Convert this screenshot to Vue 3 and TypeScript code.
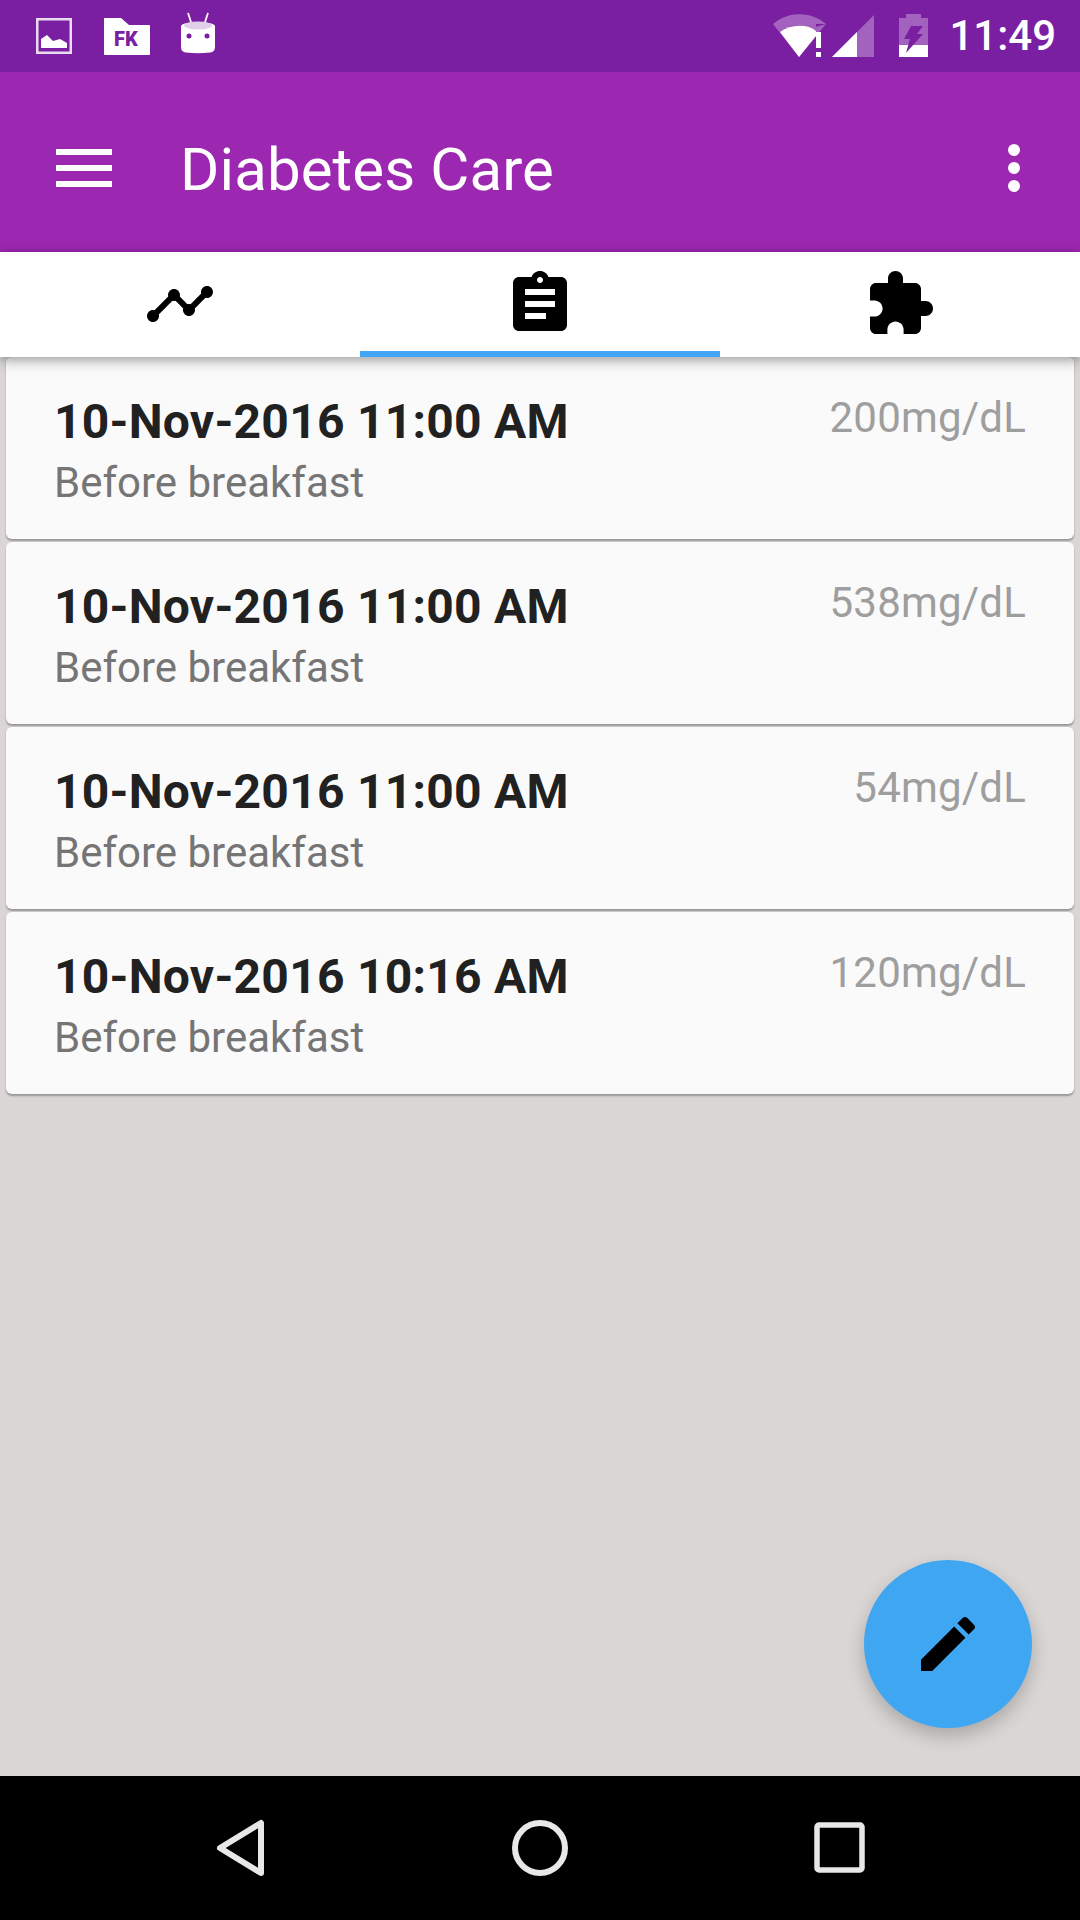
<script setup lang="ts">
interface Reading {
  time: string;
  meal: string;
  value: string;
}

const readings: Reading[] = [
  { time: "10-Nov-2016 11:00 AM", meal: "Before breakfast", value: "200mg/dL" },
  { time: "10-Nov-2016 11:00 AM", meal: "Before breakfast", value: "538mg/dL" },
  { time: "10-Nov-2016 11:00 AM", meal: "Before breakfast", value: "54mg/dL" },
  { time: "10-Nov-2016 10:16 AM", meal: "Before breakfast", value: "120mg/dL" },
];
</script>

<template>
  <div class="screen">
    <div class="status">
      <div class="status-left">
        <svg width="36" height="48" viewBox="0 0 36 48">
          <rect x="1.25" y="7.25" width="33.5" height="33.5" fill="none" stroke="#e9dcf0" stroke-width="2.5" />
          <polygon points="5,36 5,27 11,23 17,29 24,27 31,31 31,36" fill="#fff" />
        </svg>
        <svg width="47" height="48" viewBox="0 0 47 48">
          <path d="M1 6h17l8 7h20c.6 0 1 .4 1 1v28c0 .6-.4 1-1 1H2c-.6 0-1-.4-1-1z" fill="#fff" />
          <text x="11" y="34" class="fk">FK</text>
        </svg>
        <svg width="34" height="48" viewBox="0 0 34 48">
          <path d="M7 1l3 9M27 1l-3 9" stroke="#fff" stroke-width="1.8" fill="none" />
          <path d="M0 14c0-2 8-4 17-4s17 2 17 4v20c0 4-1 6-5 6.500-8 1-16 1-24 0-4-.5-5-2.500-5-6.500z" fill="#fff" />
          <ellipse cx="17" cy="13.500" rx="14" ry="4" fill="#e0d0ea" />
          <circle cx="8" cy="24" r="2.500" fill="#7b1fa2" />
          <circle cx="26" cy="24" r="2.500" fill="#7b1fa2" />
        </svg>
      </div>
      <div class="status-right">
        <svg class="wifi" width="53" height="48" viewBox="0 0 53 48">
          <path d="M0 12C15-1 38-1 53 12L26 45z" fill="#fff" fill-opacity=".3" />
          <path d="M7 20c11-8 28-8 36-1v5L26 45z" fill="#fff" />
          <path d="M43 12h10v33H43z" fill="#7b1fa2" />
          <path d="M53 12L43 24V14.800z" fill="#fff" fill-opacity=".3" />
          <rect x="43" y="20" width="5" height="16" fill="#fff" />
          <rect x="43" y="40" width="5" height="5" fill="#fff" />
        </svg>
        <svg class="signal" width="43" height="48" viewBox="0 0 43 48">
          <polygon points="1,45 43,3 43,45" fill="#fff" fill-opacity=".3" />
          <polygon points="1,45 26,20 26,45" fill="#fff" />
        </svg>
        <svg class="battery" width="29" height="48" viewBox="0 0 29 48">
          <path d="M7 2h15v4h7v27H0V6h7z" fill="#fff" fill-opacity=".3" />
          <rect y="33" width="29" height="12" fill="#fff" />
          <polygon points="12,14 24,14 18,22 24,22 7,41 11,27 5,27" fill="#7b1fa2" />
        </svg>
        <span class="clock">11:49</span>
      </div>
    </div>

    <header class="toolbar">
      <div class="menu">
        <span></span>
        <span></span>
        <span></span>
      </div>
      <h1 class="title">Diabetes Care</h1>
      <div class="more">
        <span></span>
        <span></span>
        <span></span>
      </div>
    </header>

    <nav class="tabs">
      <div class="tab">
        <svg width="72" height="72" viewBox="0 0 24 24">
          <path d="M23 8c0 1.100-.9 2-2 2-.18 0-.35-.02-.51-.07l-3.560 3.550c.05.16.07.34.07.52 0 1.100-.9 2-2 2s-2-.9-2-2c0-.18.02-.36.07-.52l-2.550-2.550c-.16.05-.34.07-.52.07s-.36-.02-.52-.07l-4.550 4.560c.05.16.07.33.07.51 0 1.100-.9 2-2 2s-2-.9-2-2 .9-2 2-2c.18 0 .35.02.51.07l4.560-4.550C8.020 9.360 8 9.180 8 9c0-1.100.9-2 2-2s2 .9 2 2c0 .18-.02.36-.07.52l2.550 2.550c.16-.05.34-.07.52-.07s.36.02.52.07l3.550-3.560C19.020 8.350 19 8.180 19 8c0-1.100.9-2 2-2s2 .9 2 2z" />
        </svg>
      </div>
      <div class="tab active">
        <svg width="72" height="72" viewBox="0 0 24 24">
          <path d="M19 3h-4.180C14.400 1.840 13.300 1 12 1c-1.300 0-2.400.84-2.820 2H5c-1.100 0-2 .9-2 2v14c0 1.100.9 2 2 2h14c1.100 0 2-.9 2-2V5c0-1.100-.9-2-2-2zm-7 0c.55 0 1 .45 1 1s-.45 1-1 1-1-.45-1-1 .45-1 1-1zm2 14H7v-2h7v2zm3-4H7v-2h10v2zm0-4H7V7h10v2z" />
        </svg>
      </div>
      <div class="tab">
        <svg width="72" height="72" viewBox="0 0 24 24">
          <path d="M20.500 11H19V7c0-1.100-.9-2-2-2h-4V3.500C13 2.120 11.880 1 10.500 1S8 2.120 8 3.500V5H4c-1.100 0-1.990.9-1.990 2v3.800H3.500c1.490 0 2.700 1.210 2.700 2.700s-1.210 2.700-2.700 2.700H2V20c0 1.100.9 2 2 2h3.800v-1.500c0-1.490 1.210-2.700 2.700-2.700 1.490 0 2.700 1.210 2.700 2.700V22H17c1.100 0 2-.9 2-2v-4h1.500c1.380 0 2.500-1.120 2.500-2.500S21.880 11 20.500 11z" />
        </svg>
      </div>
    </nav>

    <main class="content">
      <div v-for="(item, i) in readings" :key="i" class="card">
        <div class="card-main">
          <div class="card-time">{{ item.time }}</div>
          <div class="card-meal">{{ item.meal }}</div>
        </div>
        <div class="card-value">{{ item.value }}</div>
      </div>

      <button class="fab">
        <svg width="72" height="72" viewBox="0 0 24 24">
          <path d="M3 17.250V21h3.750L17.810 9.940l-3.750-3.750L3 17.250zM20.710 7.040c.39-.39.39-1.020 0-1.410l-2.340-2.340c-.39-.39-1.020-.39-1.410 0l-1.830 1.830 3.750 3.750 1.830-1.830z" />
        </svg>
      </button>
    </main>

    <footer class="navbar">
      <svg width="84" height="84" viewBox="0 0 84 84">
        <path d="M63 17v50L22 42z" fill="none" stroke="#e8e8e8" stroke-width="6" stroke-linejoin="round" />
      </svg>
      <svg width="84" height="84" viewBox="0 0 84 84">
        <circle cx="42" cy="42" r="25" fill="none" stroke="#e8e8e8" stroke-width="6" />
      </svg>
      <svg width="84" height="84" viewBox="0 0 84 84">
        <rect x="19" y="19" width="45" height="45" rx="2" fill="none" stroke="#e8e8e8" stroke-width="5.500" />
      </svg>
    </footer>
  </div>
</template>

<style scoped>
.screen {
  width: 1080px;
  height: 1920px;
  display: flex;
  flex-direction: column;
  overflow: hidden;
  background: #dad6d6;
  font-family: Roboto, "Liberation Sans", sans-serif;
}

.status {
  height: 72px;
  flex: none;
  display: flex;
  align-items: center;
  justify-content: space-between;
  padding: 0 24px 0 36px;
  background: #7b1fa2;
}

.status-left {
  display: flex;
  align-items: center;
  gap: 31px;
}

.status-right {
  display: flex;
  align-items: center;
}

.status svg {
  display: block;
  flex: none;
}

.signal {
  margin-left: 5px;
}

.battery {
  margin-left: 25px;
}

.fk {
  font-family: Roboto, sans-serif;
  font-size: 20px;
  font-weight: 900;
  fill: #7b1fa2;
}

.clock {
  margin-left: 21px;
  font-size: 42px;
  font-weight: 500;
  color: #fff;
  line-height: 72px;
}

.toolbar {
  height: 180px;
  flex: none;
  box-sizing: border-box;
  display: flex;
  align-items: center;
  padding: 12px 60px 0 56px;
  background: #9c27b0;
  color: #fff;
}

.menu {
  width: 56px;
  display: flex;
  flex-direction: column;
  gap: 10px;
}

.menu span {
  height: 6px;
  background: #fff;
}

.title {
  flex: 1;
  margin: 4px 0 0 68px;
  font-size: 60px;
  font-weight: 400;
  line-height: 1;
  letter-spacing: 0.1px;
}

.more {
  display: flex;
  flex-direction: column;
  gap: 6px;
}

.more span {
  width: 12px;
  height: 12px;
  border-radius: 50%;
  background: #fff;
}

.tabs {
  position: relative;
  z-index: 1;
  height: 105px;
  flex: none;
  display: grid;
  grid-template-columns: repeat(3, 1fr);
  background: #fff;
  box-shadow: 0 3px 12px rgba(0, 0, 0, 0.4);
}

.tab {
  display: flex;
  justify-content: center;
  padding-top: 16px;
}

.tab.active {
  border-bottom: 6px solid #42a5f5;
}

.content {
  position: relative;
  flex: 1;
  display: flex;
  flex-direction: column;
  gap: 3px;
  padding: 0 6px;
}

.card {
  height: 182px;
  flex: none;
  box-sizing: border-box;
  display: flex;
  justify-content: space-between;
  padding: 37px 48px 0;
  border-radius: 6px;
  background: #fafafa;
  box-shadow: 0 2px 2px rgba(0, 0, 0, 0.3);
}

.card-time {
  font-size: 48px;
  font-weight: 700;
  line-height: 56px;
  letter-spacing: 0.25px;
  color: #212121;
}

.card-meal {
  margin-top: 8px;
  font-size: 42px;
  line-height: 50px;
  color: #757575;
}

.card-value {
  margin-top: -1px;
  font-size: 42px;
  line-height: 50px;
  letter-spacing: 0.2px;
  color: #9e9e9e;
}

.fab {
  position: absolute;
  right: 48px;
  bottom: 48px;
  width: 168px;
  height: 168px;
  padding: 0;
  display: flex;
  align-items: center;
  justify-content: center;
  border: none;
  border-radius: 50%;
  background: #3fa6f2;
  box-shadow: 0 8px 18px rgba(0, 0, 0, 0.22);
}

.navbar {
  height: 144px;
  flex: none;
  display: flex;
  align-items: center;
  justify-content: center;
  gap: 216px;
  background: #000;
}
</style>

<style>
html,
body {
  margin: 0;
  padding: 0;
}
</style>
